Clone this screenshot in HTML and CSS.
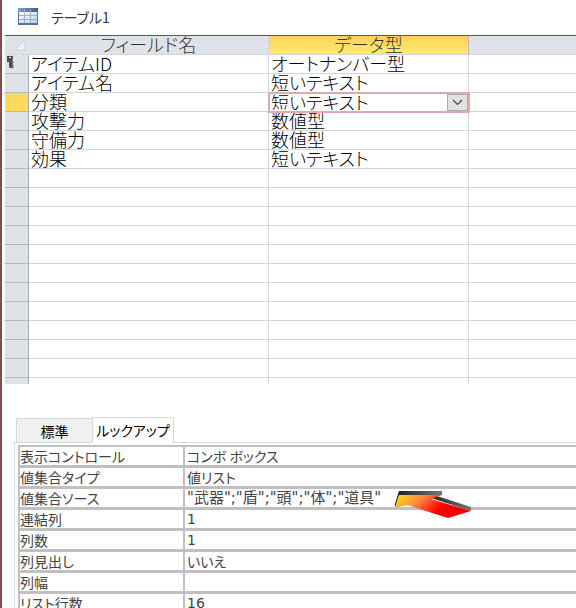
FILE: index.html
```html
<!DOCTYPE html>
<html lang="ja">
<head>
    <meta charset="UTF-8">
    <meta name="viewport" content="width=device-width, initial-scale=1.0">
    <title>テーブル1</title>
    <link rel="stylesheet" href="styles.css">
</head>
<body>
    <header class="titlebar">
        <svg class="table-icon" width="20" height="17" viewBox="0 0 20 17" aria-hidden="true">
            <defs>
                <linearGradient id="headFill" x1="0" y1="0" x2="1" y2="0">
                    <stop offset="0" stop-color="#7f9dd2"/>
                    <stop offset="1" stop-color="#3f5d94"/>
                </linearGradient>
                <linearGradient id="cellFill" x1="0" y1="0" x2="1" y2="1">
                    <stop offset="0" stop-color="#ffffff"/>
                    <stop offset="1" stop-color="#b9cfe9"/>
                </linearGradient>
            </defs>
            <rect x="0" y="0" width="20" height="17" fill="#5a7099"/>
            <rect x="1" y="4" width="18" height="11" fill="url(#cellFill)"/>
            <rect x="0" y="0" width="20" height="4" fill="url(#headFill)"/>
            <path d="M1 7.500h18M1 11.500h18M6.500 1v14M12.500 1v14" stroke="#9db0cc" fill="none"/>
        </svg>
        <h1>テーブル1</h1>
    </header>

    <table class="fields">
        <colgroup>
            <col class="col-selector">
            <col class="col-name">
            <col class="col-type">
            <col>
        </colgroup>
        <thead>
            <tr>
                <th class="corner">
                    <svg width="12" height="12" viewBox="0 0 12 12" aria-hidden="true"><path d="M11 1v10H1z" fill="#eef2f8" stroke="#c5d0de"/></svg>
                </th>
                <th>フィールド名</th>
                <th class="active">データ型</th>
                <th></th>
            </tr>
        </thead>
        <tbody>
            <tr>
                <th class="key">
                    <svg width="8" height="14" viewBox="0 0 8 14" aria-hidden="true">
                        <path d="M0 1h6v5H5v7H3L2 12V7H0z" fill="#4c4c4c"/>
                        <path d="M2 2h2v1H2z" fill="#e8e8e8"/>
                        <path d="M5.500 3v10M6 7.500h1M6 10.500h1M6 12.500h1" fill="none" stroke="#777"/>
                    </svg>
                </th>
                <td>アイテムID</td><td>オートナンバー型</td><td></td>
            </tr>
            <tr><th></th><td>アイテム名</td><td>短いテキスト</td><td></td></tr>
            <tr>
                <th class="current"></th>
                <td>分類</td>
                <td class="editing">
                    <div class="picker">
                        <select aria-label="分類のデータ型">
                            <option>短いテキスト</option>
                            <option>数値型</option>
                            <option>オートナンバー型</option>
                        </select>
                        <span class="drop">
                            <svg width="11" height="7" viewBox="0 0 11 7" aria-hidden="true"><path d="M1 1l4.500 4.500L10 1" fill="none" stroke="#444" stroke-width="1.200"/></svg>
                        </span>
                    </div>
                </td>
                <td></td>
            </tr>
            <tr><th></th><td>攻撃力</td><td>数値型</td><td></td></tr>
            <tr><th></th><td>守備力</td><td>数値型</td><td></td></tr>
            <tr><th></th><td>効果</td><td>短いテキスト</td><td></td></tr>
            <tr><th></th><td></td><td></td><td></td></tr>
            <tr><th></th><td></td><td></td><td></td></tr>
            <tr><th></th><td></td><td></td><td></td></tr>
            <tr><th></th><td></td><td></td><td></td></tr>
            <tr><th></th><td></td><td></td><td></td></tr>
            <tr><th></th><td></td><td></td><td></td></tr>
            <tr><th></th><td></td><td></td><td></td></tr>
            <tr><th></th><td></td><td></td><td></td></tr>
            <tr><th></th><td></td><td></td><td></td></tr>
            <tr><th></th><td></td><td></td><td></td></tr>
            <tr><th></th><td></td><td></td><td></td></tr>
            <tr class="last"><th></th><td></td><td></td><td></td></tr>
        </tbody>
    </table>

    <section class="properties">
        <div class="tabs" role="tablist">
            <button type="button" role="tab" aria-selected="false" class="tab">標準</button>
            <button type="button" role="tab" aria-selected="true" class="tab selected">ルックアップ</button>
        </div>
        <div class="sheet">
            <div class="prop"><label for="control">表示コントロール</label><input type="text" id="control" value="コンボ ボックス"></div>
            <div class="prop"><label for="rowType">値集合タイプ</label><input type="text" id="rowType" value="値リスト"></div>
            <div class="prop">
                <label for="rowSource">値集合ソース</label><input type="text" id="rowSource" class="source" value='"武器";"盾";"頭";"体";"道具"'>
                <svg class="pointer" width="78" height="29" viewBox="0 0 78 29" aria-hidden="true">
                    <defs>
                        <linearGradient id="heat" x1="0" y1="0" x2="1" y2="0.3">
                            <stop offset="0" stop-color="#ffe000"/>
                            <stop offset="0.35" stop-color="#ff8a48"/>
                            <stop offset="0.7" stop-color="#ff0000"/>
                            <stop offset="1" stop-color="#f00000"/>
                        </linearGradient>
                        <linearGradient id="edge" x1="0" y1="0" x2="1" y2="0">
                            <stop offset="0" stop-color="#222"/>
                            <stop offset="1" stop-color="#777"/>
                        </linearGradient>
                    </defs>
                    <path d="M5 1h43v4H5z" fill="url(#edge)"/>
                    <path d="M5 1v4L1 18v-4z" fill="#111"/>
                    <path d="M37 8l6-2 34 11v4z" fill="url(#edge)"/>
                    <path d="M5 5h43l-11 4 40 12-23 7-41-13-12 3z" fill="url(#heat)"/>
                </svg>
            </div>
            <div class="prop"><label for="boundCol">連結列</label><input type="text" id="boundCol" class="number" value="1"></div>
            <div class="prop"><label for="colCount">列数</label><input type="text" id="colCount" class="number" value="1"></div>
            <div class="prop"><label for="colHeads">列見出し</label><input type="text" id="colHeads" value="いいえ"></div>
            <div class="prop"><label for="colWidths">列幅</label><input type="text" id="colWidths" value=""></div>
            <div class="prop"><label for="listRows">リスト行数</label><input type="text" id="listRows" class="number" value="16"></div>
        </div>
    </section>
</body>
</html>
```

FILE: styles.css
```css
* {
    box-sizing: border-box;
}
body {
    margin: 0;
    height: 100vh;
    overflow: hidden;
    padding-left: 3px;
    border-left: 2px solid #8a4a50;
    background: #fff;
    font-family: "Noto Sans CJK JP", sans-serif;
    font-feature-settings: "palt";
    color: #444;
}
.titlebar {
    display: flex;
    align-items: center;
    gap: 13px;
    height: 35px;
    padding: 0 0 2px 13px;
}
h1 {
    margin: 0;
    font-size: 14px;
    font-weight: normal;
    color: #333;
}

/* フィールド一覧 */
.fields {
    width: 100%;
    table-layout: fixed;
    border-collapse: separate;
    border-spacing: 0;
    border-top: 1px solid #8a4048;
    font-size: 18px;
    font-weight: 300;
    line-height: 16px;
    color: #000;
}
.col-selector {
    width: 24px;
}
.col-name {
    width: 240px;
}
.col-type {
    width: 200px;
}
.fields th,
.fields td {
    height: 19px;
    padding: 0 0 0 2px;
    border-right: 1px solid #d0d7e0;
    border-bottom: 1px solid #d0d7e0;
    white-space: nowrap;
    text-align: left;
    vertical-align: top;
    font-weight: 300;
}
.fields th {
    background: #dfe3e8;
    border-right-color: #a9adb3;
    border-bottom-color: #b4b8be;
}
.fields thead th {
    padding: 0;
    border-color: #cfd6df;
    text-align: center;
    color: #333;
}
.fields thead .active {
    background: linear-gradient(#ffd058, #ffec70);
    border-right-color: #b8b8b8;
}
.fields thead .corner {
    border-right-color: #dfe3e8;
    vertical-align: middle;
}
.fields svg {
    display: block;
}
.corner svg {
    margin-left: 9px;
}
.fields .current {
    background: #ffd95e;
}
.fields th:last-child,
.fields td:last-child {
    border-right: none;
}
.fields .last th,
.fields .last td {
    height: 6px;
    border-bottom: none;
}
.fields .editing {
    padding: 0;
    border: none;
}
.picker {
    display: flex;
    height: 21px;
    margin: -1px;
    border: 2px solid #e5a9ab;
    background: #fff;
    position: relative;
}
.picker select {
    flex: 1;
    appearance: none;
    margin: 0;
    padding: 0 0 1px 1px;
    border: none;
    background: none;
    font: inherit;
    font-feature-settings: inherit;
    color: inherit;
}
.drop {
    position: absolute;
    top: 0;
    right: 0;
    bottom: 0;
    display: flex;
    align-items: center;
    justify-content: center;
    width: 21px;
    border: 1px solid #aaa;
    background: #e1e1e1;
    pointer-events: none;
}

/* プロパティ シート */
.properties {
    margin-top: 33px;
    padding-left: 9px;
    font-size: 14px;
    line-height: 18px;
}
.tabs {
    display: flex;
    align-items: flex-end;
    padding-left: 2px;
}
.tab {
    width: 76px;
    height: 24px;
    padding: 0;
    border: 1px solid #d9d9d9;
    border-right: none;
    border-bottom: none;
    background: #f0f0f0;
    font: inherit;
    font-feature-settings: inherit;
    color: #000;
}
.tab.selected {
    width: 82px;
    height: 26px;
    margin-bottom: -1px;
    padding-bottom: 2px;
    border-right: 1px solid #d9d9d9;
    background: #fff;
    z-index: 1;
}
.sheet {
    padding: 2px 0 0 3px;
    border-top: 1px solid #d9d9d9;
    border-left: 1px solid #d9d9d9;
}
.prop {
    display: flex;
    position: relative;
    border-left: 2px solid #c0c0c0;
    border-bottom: 3px solid #c0c0c0;
}
.prop:first-child {
    border-top: 2px solid #c0c0c0;
}
.prop label {
    width: 165px;
    height: 18px;
    border-right: 2px solid #c0c0c0;
    white-space: nowrap;
}
.prop input {
    flex: 1;
    min-width: 0;
    height: 18px;
    margin: 0;
    padding: 0 0 0 2px;
    border: none;
    outline: none;
    background: #fff;
    font: inherit;
    font-feature-settings: inherit;
    color: inherit;
}
.prop .source {
    font-family: "DejaVu Sans", "Noto Sans CJK JP", sans-serif;
    font-size: 15px;
}
.prop .number {
    font-family: "DejaVu Sans", sans-serif;
}
.pointer {
    position: absolute;
    left: 374px;
    top: 1px;
    z-index: 1;
}
```
